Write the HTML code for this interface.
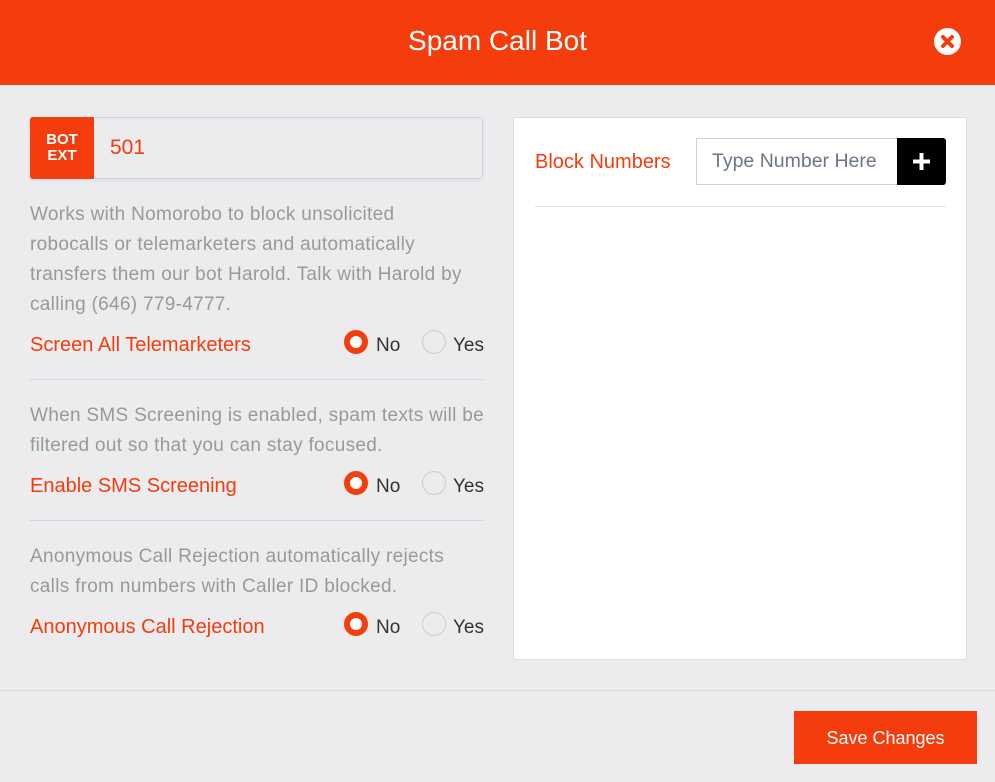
<!DOCTYPE html>
<html><head><meta charset="utf-8"><style>
*{box-sizing:border-box;margin:0;padding:0}
body{width:995px;height:782px;background:#ececee;font-family:"Liberation Sans",sans-serif;position:relative;overflow:hidden}
.hdr{position:absolute;left:0;top:0;width:995px;height:85px;background:#f53c0c;color:#fff;text-align:center;font-size:28px;line-height:82px}
.close{position:absolute;left:934px;top:28px;width:27px;height:27px;border-radius:50%;background:#fff}
.ext{position:absolute;left:30px;top:117px;width:453px;height:62px;border:1px solid #d3d4d8;border-radius:3px;background:#ececee;box-shadow:0 2px 4px rgba(0,0,0,.06)}
.ext .lab{position:absolute;left:-1px;top:-1px;width:64px;height:62px;background:#f53c0c;color:#fff;font-weight:bold;font-size:15px;line-height:16px;text-align:center;padding-top:15px;border-radius:3px 0 0 3px}
.ext .v{position:absolute;left:79px;top:18px;color:#f53c0c;font-size:21px}
.p{position:absolute;left:30px;color:#999;font-size:19px;letter-spacing:0.3px;line-height:30px;white-space:nowrap}
.t{position:absolute;left:30px;color:#f53c0c;font-size:20px;white-space:nowrap}
.r{position:absolute;width:24px;height:24px;border-radius:50%}
.on{border:6px solid #f53c0c;background:#fff}
.off{border:1px solid #ccc;background:#ececee}
.rl{position:absolute;font-size:19px;color:#333}
.hr{position:absolute;left:30px;width:453px;height:1px;background:#d3d4d8}
.panel{position:absolute;left:513px;top:117px;width:454px;height:543px;background:#fff;border:1px solid #dcdcdf}
.btn{position:absolute;left:794px;top:711px;width:183px;height:53px;background:#f53c0c;color:#fff;font-size:18px;text-align:center;line-height:54px}
</style></head><body>
<div class="hdr">Spam Call Bot</div>
<div class="close"><svg width="27" height="27" viewBox="0 0 27 27"><path d="M9 9L18 18M18 9L9 18" stroke="#f53c0c" stroke-width="4" stroke-linecap="round"/></svg></div>
<div class="ext"><div class="lab">BOT<br>EXT</div><div class="v">501</div></div>
<div class="p" style="top:200px">Works with Nomorobo to block unsolicited<br>robocalls or telemarketers and automatically<br>transfers them our bot Harold. Talk with Harold by<br>calling (646) 779-4777.</div>
<div class="t" style="top:334px">Screen All Telemarketers</div>
<div class="r on" style="left:344px;top:330px"></div><div class="rl" style="left:376px;top:335px">No</div>
<div class="r off" style="left:422px;top:330px"></div><div class="rl" style="left:453px;top:335px">Yes</div>
<div class="hr" style="top:379px"></div>
<div class="p" style="top:401px">When SMS Screening is enabled, spam texts will be<br>filtered out so that you can stay focused.</div>
<div class="t" style="top:475px">Enable SMS Screening</div>
<div class="r on" style="left:344px;top:471px"></div><div class="rl" style="left:376px;top:476px">No</div>
<div class="r off" style="left:422px;top:471px"></div><div class="rl" style="left:453px;top:476px">Yes</div>
<div class="hr" style="top:520px"></div>
<div class="p" style="top:542px">Anonymous Call Rejection automatically rejects<br>calls from numbers with Caller ID blocked.</div>
<div class="t" style="top:616px">Anonymous Call Rejection</div>
<div class="r on" style="left:344px;top:612px"></div><div class="rl" style="left:376px;top:617px">No</div>
<div class="r off" style="left:422px;top:612px"></div><div class="rl" style="left:453px;top:617px">Yes</div>
<div class="panel">
<div style="position:absolute;left:21px;top:33px;color:#f53c0c;font-size:20px">Block Numbers</div>
<div style="position:absolute;left:182px;top:20px;width:202px;height:47px;border:1px solid #ccd0d8;color:#6b7787;font-size:19.5px;line-height:45px;padding-left:15px;white-space:nowrap;overflow:hidden">Type Number Here</div>
<div style="position:absolute;left:383px;top:20px;width:49px;height:47px;background:#000;border-radius:0 3px 3px 0"><svg width="49" height="47"><path d="M24.5 15V32M16 23.5H33" stroke="#fff" stroke-width="4"/></svg></div>
<div style="position:absolute;left:21px;top:88px;width:411px;height:1px;background:#e0e0e3"></div>
</div>
<div style="position:absolute;left:0;top:690px;width:995px;height:1px;background:#dcdcdf"></div>
<div class="btn">Save Changes</div>
</body></html>
